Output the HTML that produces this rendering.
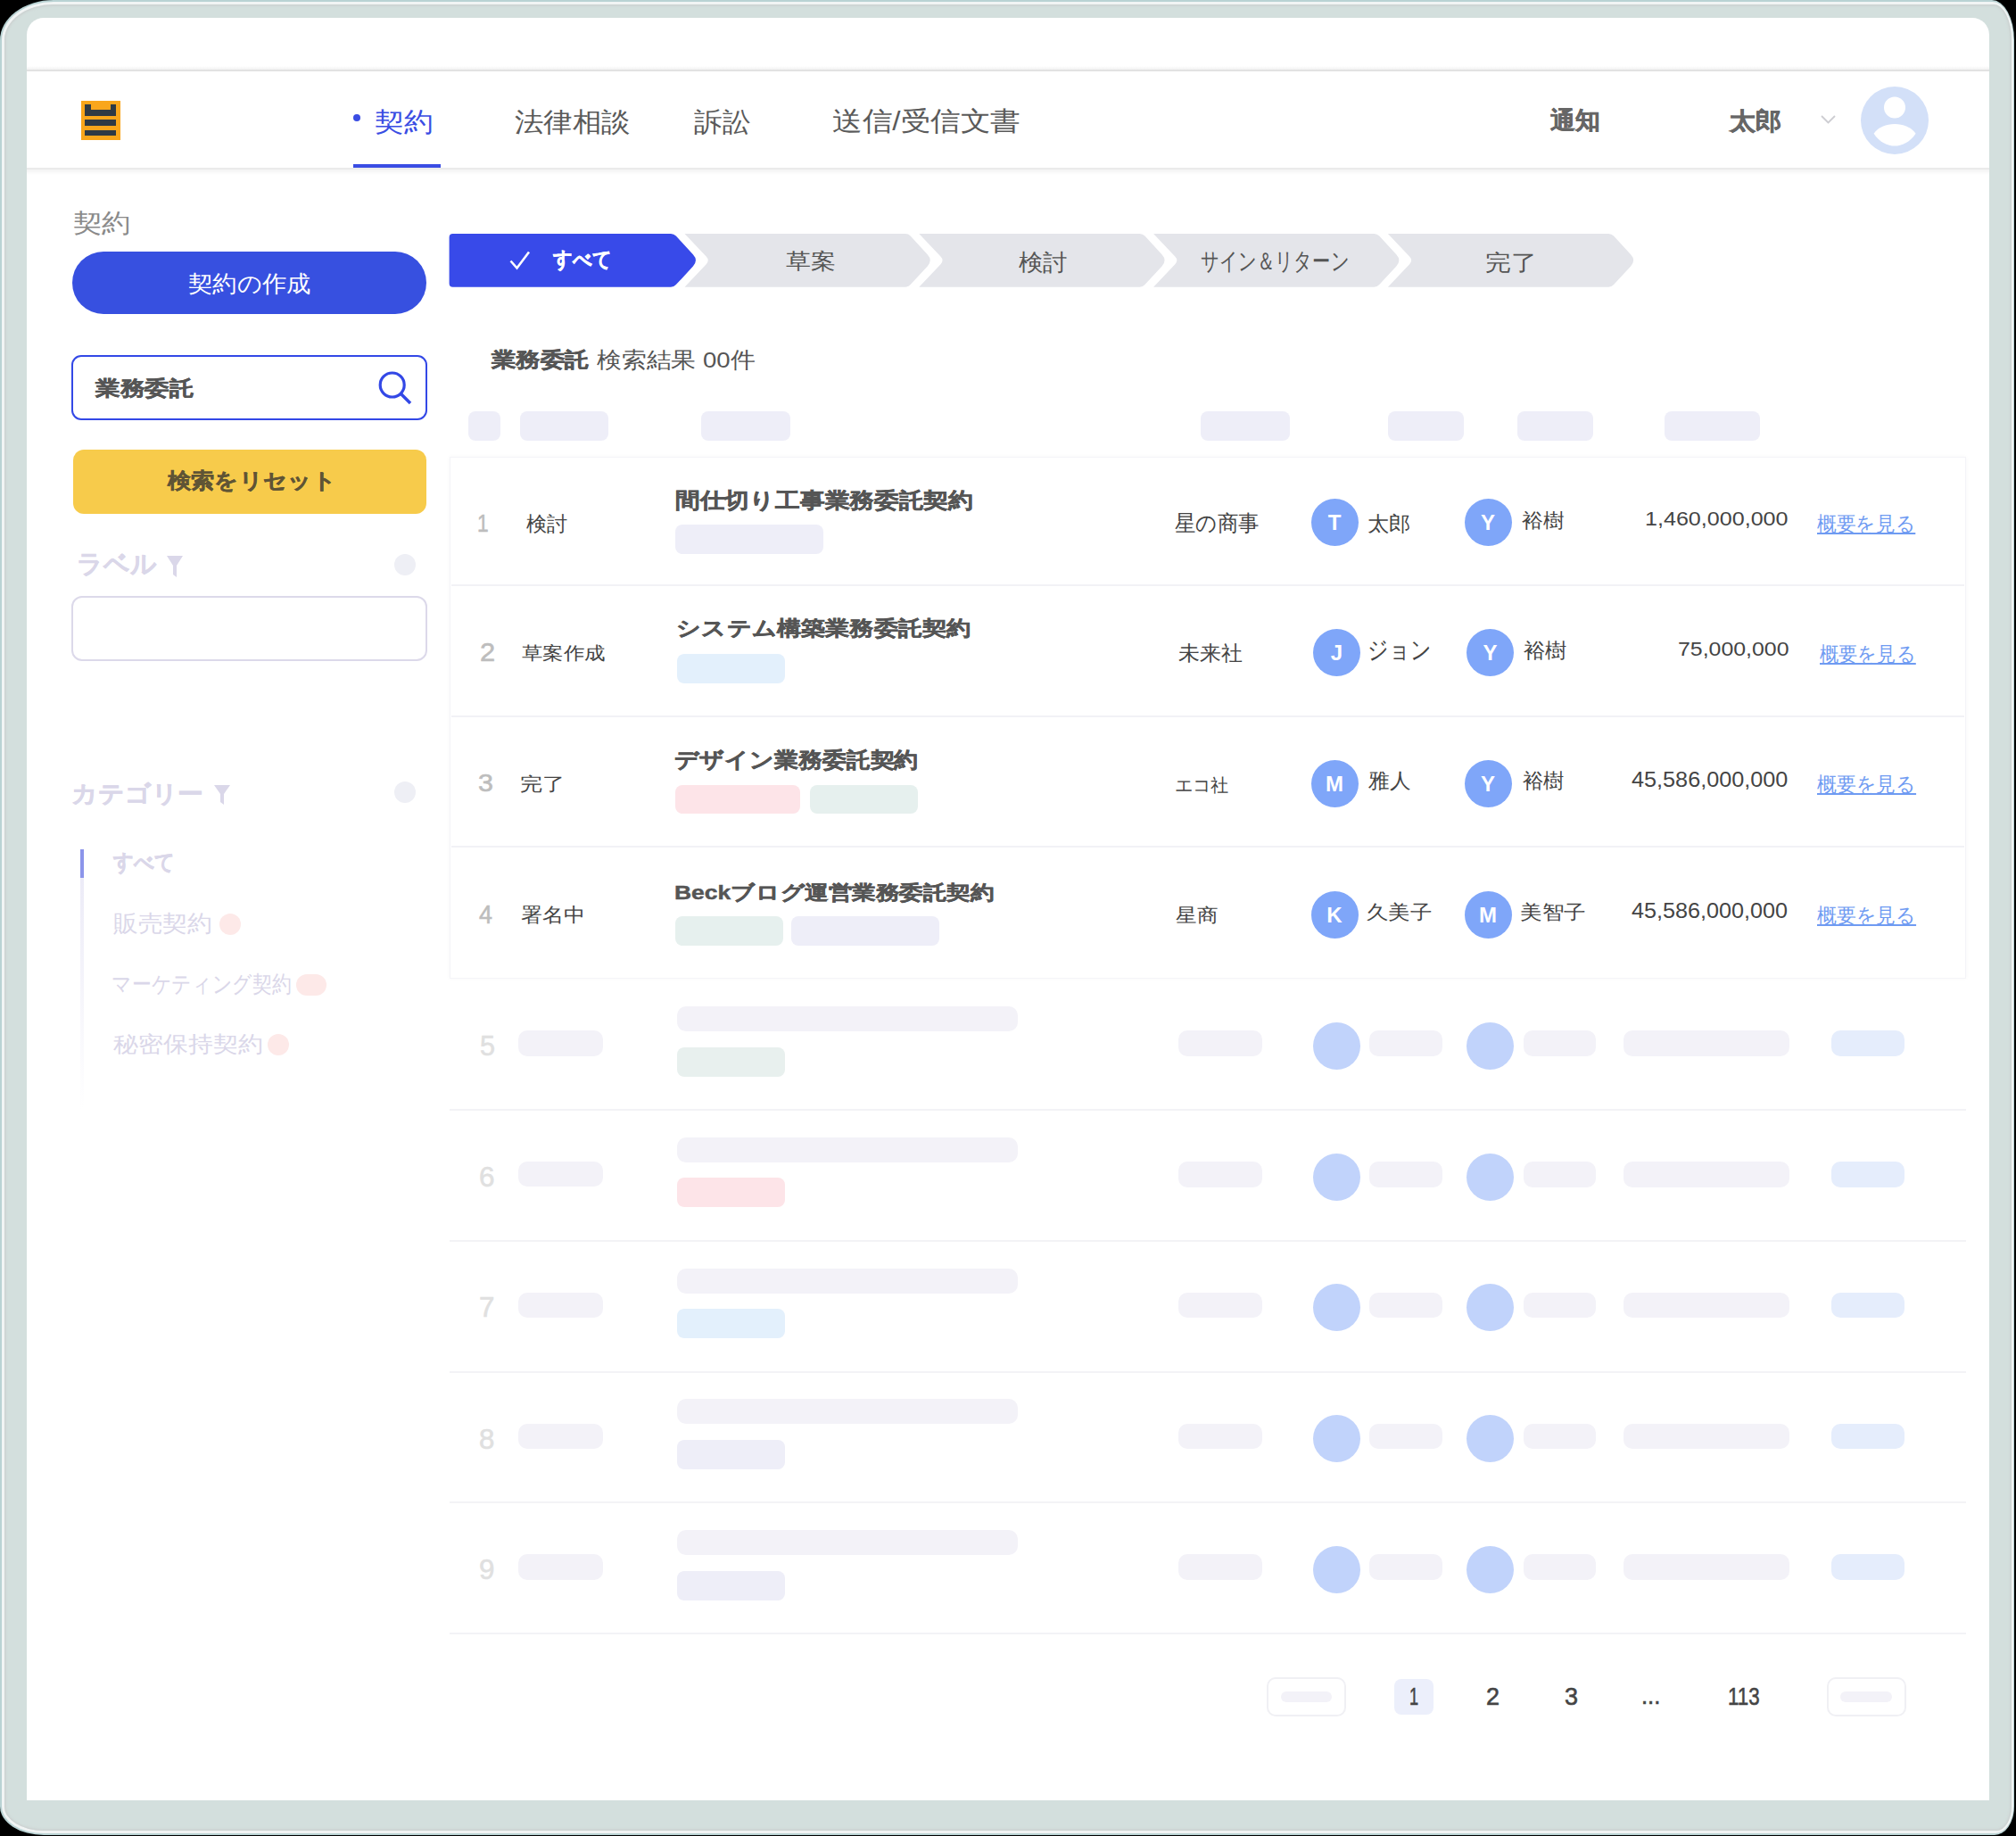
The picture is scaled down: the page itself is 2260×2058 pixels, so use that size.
<!DOCTYPE html>
<html lang="ja">
<head>
<meta charset="utf-8">
<style>
*{margin:0;padding:0;box-sizing:border-box}
html,body{width:2260px;height:2058px;overflow:hidden;background:#000}
body{position:relative;font-family:"Liberation Sans",sans-serif;color:#555}
.a{position:absolute}
.t{position:absolute;white-space:nowrap;line-height:1}
</style>
</head>
<body>
<div class="a" style="left:0;top:0;width:2258px;height:2057px;border-radius:60px 25px 22px 49px / 45px 45px 32px 32px;background:#b9d3d4"></div>
<div class="a" style="left:1.5px;top:2px;width:2255px;height:2053px;border-radius:58px 23px 20px 47px / 43px 43px 30px 30px;background:#f1f4f4"></div>
<div class="a" style="left:4.5px;top:5px;width:2250px;height:2047px;border-radius:55px 20px 17px 44px / 40px 40px 27px 27px;background:#d3dfdd;box-shadow:inset 0 0 3px 1px #c9cccc"></div>
<div class="a" style="left:30px;top:20px;width:2200px;height:1998px;background:#fff;border-radius:19px 19px 0 0"></div>
<div class="a" style="left:30.0px;top:74.0px;width:2200.0px;height:4.0px;background:linear-gradient(#fff,#f2f2f2)"></div>
<div class="a" style="left:30.0px;top:78.0px;width:2200.0px;height:2.0px;background:#e2e2e2"></div>
<div class="a" style="left:30.0px;top:188.0px;width:2200.0px;height:2.0px;background:#ebebeb"></div>
<div class="a" style="left:30.0px;top:190.0px;width:2200.0px;height:6.0px;background:linear-gradient(#f3f3f3,#fff)"></div>
<div class="a" style="left:91.0px;top:113.0px;width:44.0px;height:44.0px;background:#f9a61b"></div>
<div class="a" style="left:95.0px;top:117.0px;width:35.3px;height:13.2px;background:#2f3a44"></div>
<div class="a" style="left:102.0px;top:117.0px;width:21.8px;height:6.2px;background:#f9a61b"></div>
<div class="a" style="left:95.0px;top:134.4px;width:35.3px;height:6.8px;background:#2f3a44"></div>
<div class="a" style="left:95.0px;top:145.5px;width:35.3px;height:6.8px;background:#2f3a44"></div>
<div class="a" style="left:396px;top:128px;width:8px;height:8px;border-radius:50%;background:#3a4de3"></div>
<div class="t" style="left:419.61px;top:121.75px;font-size:29.51px;color:#3a4de3;font-weight:normal;transform:scaleX(1.0883);transform-origin:0 0;">契約</div>
<div class="a" style="left:396.0px;top:184.0px;width:98.0px;height:4.0px;background:#3a4de3"></div>
<div class="t" style="left:576.97px;top:121.75px;font-size:29.51px;color:#5a5a5a;font-weight:normal;transform:scaleX(1.0828);transform-origin:0 0;">法律相談</div>
<div class="t" style="left:778.00px;top:121.75px;font-size:29.53px;color:#5a5a5a;font-weight:normal;transform:scaleX(1.0583);transform-origin:0 0;">訴訟</div>
<div class="t" style="left:932.92px;top:120.95px;font-size:29.76px;color:#5a5a5a;font-weight:normal;transform:scaleX(1.1209);transform-origin:0 0;">送信/受信文書</div>
<div class="t" style="left:1737.99px;top:122.13px;font-size:27.03px;color:#666;font-weight:bold;-webkit-text-stroke-width:0.45px;transform:scaleX(1.0339);transform-origin:0 0;">通知</div>
<div class="t" style="left:1938.94px;top:122.90px;font-size:26.91px;color:#666;font-weight:bold;-webkit-text-stroke-width:0.45px;transform:scaleX(1.0767);transform-origin:0 0;">太郎</div>
<svg class="a" style="left:2040px;top:127px" width="20" height="14" viewBox="0 0 20 14"><path d="M2 3 L9.5 10.5 L17 3" fill="none" stroke="#cdcdd2" stroke-width="1.8"/></svg>
<svg class="a" style="left:2086px;top:97px" width="76" height="76" viewBox="0 0 76 76">
<circle cx="38" cy="38" r="38" fill="#d3e0f8"/><circle cx="38" cy="23.5" r="12" fill="#fff"/><path d="M14.6 52.7 C24 38.5 52 38.5 61.6 52.7 C55 62.5 46 66.6 38 66.6 C30 66.6 21 62.5 14.6 52.7 Z" fill="#fff"/></svg>
<div class="t" style="left:81.55px;top:236.10px;font-size:28.60px;color:#8a8a8a;font-weight:normal;transform:scaleX(1.1124);transform-origin:0 0;">契約</div>
<div class="a" style="left:81.4px;top:282.0px;width:396.6px;height:70.0px;background:#3750e0;border-radius:35px"></div>
<div class="t" style="left:211.34px;top:306.02px;font-size:25.65px;color:#fff;font-weight:normal;transform:scaleX(1.0496);transform-origin:0 0;">契約の作成</div>
<div class="a" style="left:80.3px;top:398.0px;width:399.2px;height:73.0px;border:2px solid #3348e6;border-radius:11px;background:#fff"></div>
<div class="t" style="left:107.00px;top:423.56px;font-size:23.18px;color:#555;font-weight:bold;-webkit-text-stroke-width:0.45px;transform:scaleX(1.1975);transform-origin:0 0;">業務委託</div>
<svg class="a" style="left:420px;top:412px" width="44" height="44" viewBox="0 0 44 44"><circle cx="19.7" cy="19.5" r="13.5" fill="none" stroke="#3348e6" stroke-width="3.2"/><path d="M29.5 29.5 L40 40" stroke="#3348e6" stroke-width="3.6" stroke-linecap="butt"/></svg>
<div class="a" style="left:81.8px;top:504.0px;width:396.2px;height:71.6px;background:#f7cb4b;border-radius:12px"></div>
<div class="t" style="left:187.94px;top:527.30px;font-size:24.14px;color:#5f5435;font-weight:bold;-webkit-text-stroke-width:0.45px;transform:scaleX(1.0919);transform-origin:0 0;">検索をリセット</div>
<div class="t" style="left:86.20px;top:618.38px;font-size:28.71px;color:#dad7e9;font-weight:bold;-webkit-text-stroke-width:0.45px;transform:scaleX(0.9924);transform-origin:0 0;">ラベル</div>
<svg class="a" style="left:186px;top:622px" width="20" height="26" viewBox="0 0 20 26"><path d="M1 1 H19 L12 12 V25 L8 22 V12 Z" fill="#dad7e9"/></svg>
<div class="a" style="left:442px;top:621px;width:24px;height:24px;border-radius:50%;background:#eeeff5"></div>
<div class="a" style="left:80.3px;top:668.0px;width:399.2px;height:73.0px;border:2px solid #dcd9ea;border-radius:12px"></div>
<div class="t" style="left:79.99px;top:876.97px;font-size:26.71px;color:#dad7e9;font-weight:bold;-webkit-text-stroke-width:0.45px;transform:scaleX(1.0663);transform-origin:0 0;">カテゴリー</div>
<svg class="a" style="left:239px;top:879px" width="20" height="24" viewBox="0 0 20 24"><path d="M1 1 H19 L12 11 V23 L8 20 V11 Z" fill="#dad7e9"/></svg>
<div class="a" style="left:442px;top:876px;width:24px;height:24px;border-radius:50%;background:#eeeff5"></div>
<div class="a" style="left:90.0px;top:984.0px;width:4.0px;height:260.0px;background:linear-gradient(#ecebf7,#fff)"></div>
<div class="a" style="left:90.0px;top:952.0px;width:4.0px;height:32.0px;background:#8c95ea"></div>
<div class="t" style="left:127.06px;top:953.87px;font-size:25.29px;color:#dad7e9;font-weight:bold;-webkit-text-stroke-width:0.45px;transform:scaleX(0.8929);transform-origin:0 0;">すべて</div>
<div class="t" style="left:126.93px;top:1023.00px;font-size:25.96px;color:#dad7e9;font-weight:normal;transform:scaleX(1.0661);transform-origin:0 0;">販売契約</div>
<div class="a" style="left:246px;top:1024px;width:24px;height:24px;border-radius:50%;background:#fde9e8"></div>
<div class="t" style="left:125.01px;top:1090.94px;font-size:25.84px;color:#dad7e9;font-weight:normal;transform:scaleX(0.8413);transform-origin:0 0;">マーケティング契約</div>
<div class="a" style="left:331.7px;top:1091.5px;width:34.3px;height:24.0px;background:#fde9e8;border-radius:12px"></div>
<div class="t" style="left:126.59px;top:1158.73px;font-size:24.72px;color:#dad7e9;font-weight:normal;transform:scaleX(1.1165);transform-origin:0 0;">秘密保持契約</div>
<div class="a" style="left:300px;top:1159px;width:24px;height:24px;border-radius:50%;background:#fde9e8"></div>
<svg class="a" style="left:0;top:0" width="2260" height="400" viewBox="0 0 2260 400"><path d="M503.60 265.90 Q503.60 261.90 507.60 261.90 L752.00 261.90 Q755.50 261.90 757.87 264.48 L776.91 285.18 Q783.00 291.80 776.91 298.42 L757.87 319.12 Q755.50 321.70 752.00 321.70 L507.60 321.70 Q503.60 321.70 503.60 317.70 Z" fill="#384ae9"/><path d="M767.50 261.90 L1014.80 261.90 Q1018.30 261.90 1020.67 264.48 L1039.71 285.18 Q1045.80 291.80 1039.71 298.42 L1020.67 319.12 Q1018.30 321.70 1014.80 321.70 L767.50 321.70 L791.68 296.16 Q795.80 291.80 791.68 287.44 Z" fill="#e4e5ea"/><path d="M1030.30 261.90 L1277.60 261.90 Q1281.10 261.90 1283.47 264.48 L1302.51 285.18 Q1308.60 291.80 1302.51 298.42 L1283.47 319.12 Q1281.10 321.70 1277.60 321.70 L1030.30 321.70 L1054.48 296.16 Q1058.60 291.80 1054.48 287.44 Z" fill="#e4e5ea"/><path d="M1293.10 261.90 L1540.40 261.90 Q1543.90 261.90 1546.27 264.48 L1565.31 285.18 Q1571.40 291.80 1565.31 298.42 L1546.27 319.12 Q1543.90 321.70 1540.40 321.70 L1293.10 321.70 L1317.28 296.16 Q1321.40 291.80 1317.28 287.44 Z" fill="#e4e5ea"/><path d="M1555.90 261.90 L1803.20 261.90 Q1806.70 261.90 1809.07 264.48 L1828.11 285.18 Q1834.20 291.80 1828.11 298.42 L1809.07 319.12 Q1806.70 321.70 1803.20 321.70 L1555.90 321.70 L1580.08 296.16 Q1584.20 291.80 1580.08 287.44 Z" fill="#e4e5ea"/></svg>
<svg class="a" style="left:570px;top:280px" width="26" height="26" viewBox="0 0 26 26"><path d="M2.5 12.5 L9.5 20.5 L23 2.5" fill="none" stroke="#fff" stroke-width="2.6"/></svg>
<div class="t" style="left:619.99px;top:279.12px;font-size:23.77px;color:#fff;font-weight:bold;-webkit-text-stroke-width:0.45px;transform:scaleX(0.8872);transform-origin:0 0;">すべて</div>
<div class="t" style="left:881.16px;top:282.45px;font-size:23.71px;color:#555;font-weight:normal;transform:scaleX(1.1675);transform-origin:0 0;">草案</div>
<div class="t" style="left:1142.04px;top:281.64px;font-size:25.95px;color:#555;font-weight:normal;transform:scaleX(1.0550);transform-origin:0 0;">検討</div>
<div class="t" style="left:1345.98px;top:279.91px;font-size:27.04px;color:#555;font-weight:normal;transform:scaleX(0.7506);transform-origin:0 0;">サイン＆リターン</div>
<div class="t" style="left:1665.35px;top:282.91px;font-size:24.58px;color:#555;font-weight:normal;transform:scaleX(1.1532);transform-origin:0 0;">完了</div>
<div class="t" style="left:550.67px;top:391.57px;font-size:23.18px;color:#555;font-weight:bold;-webkit-text-stroke-width:0.45px;transform:scaleX(1.1889);transform-origin:0 0;">業務委託</div>
<div class="t" style="left:668.91px;top:392.16px;font-size:24.76px;color:#555;font-weight:normal;transform:scaleX(1.1128);transform-origin:0 0;">検索結果 00件</div>
<div class="a" style="left:525.3px;top:461.0px;width:35.7px;height:32.5px;background:#eeeef8;border-radius:8px"></div>
<div class="a" style="left:582.7px;top:461.0px;width:99.7px;height:32.5px;background:#eeeef8;border-radius:8px"></div>
<div class="a" style="left:785.7px;top:461.0px;width:100.3px;height:32.5px;background:#eeeef8;border-radius:8px"></div>
<div class="a" style="left:1346.0px;top:461.0px;width:100.0px;height:32.5px;background:#eeeef8;border-radius:8px"></div>
<div class="a" style="left:1556.0px;top:461.0px;width:85.0px;height:32.5px;background:#eeeef8;border-radius:8px"></div>
<div class="a" style="left:1701.0px;top:461.0px;width:85.0px;height:32.5px;background:#eeeef8;border-radius:8px"></div>
<div class="a" style="left:1865.7px;top:461.0px;width:107.3px;height:32.5px;background:#eeeef8;border-radius:8px"></div>
<div class="a" style="left:503.5px;top:512.0px;width:1700.5px;height:585.0px;border:1.5px solid #f4f4f8;box-shadow:0 0 5px rgba(0,0,0,0.035);background:#fff"></div>
<div class="a" style="left:505.5px;top:655.0px;width:1696.5px;height:2.0px;background:#f2f2f6"></div>
<div class="a" style="left:505.5px;top:802.0px;width:1696.5px;height:2.0px;background:#f2f2f6"></div>
<div class="a" style="left:505.5px;top:948.0px;width:1696.5px;height:2.0px;background:#f2f2f6"></div>
<div class="t" style="left:535.43px;top:573.36px;font-size:27.44px;color:#bdbdbd;font-weight:normal;-webkit-text-stroke-width:0.6px;transform:scaleX(0.8271);transform-origin:0 0;">1</div>
<div class="t" style="left:590.00px;top:575.61px;font-size:23.08px;color:#444;font-weight:normal;transform:scaleX(1.0075);transform-origin:0 0;">検討</div>
<div class="t" style="left:757.02px;top:548.64px;font-size:23.84px;color:#555;font-weight:bold;-webkit-text-stroke-width:0.45px;transform:scaleX(1.1556);transform-origin:0 0;">間仕切り工事業務委託契約</div>
<div class="a" style="left:756.9px;top:588.0px;width:165.8px;height:32.6px;background:#eeeef8;border-radius:8px"></div>
<div class="t" style="left:1317.45px;top:574.88px;font-size:24.58px;color:#444;font-weight:normal;transform:scaleX(0.9377);transform-origin:0 0;">星の商事</div>
<div class="a" style="left:1469.5px;top:559.1px;width:53px;height:53px;border-radius:50%;background:#7fa6f9;color:#fff;font-weight:bold;font-size:24px;line-height:53px;text-align:center">T</div>
<div class="t" style="left:1532.96px;top:575.62px;font-size:22.96px;color:#444;font-weight:normal;transform:scaleX(1.0573);transform-origin:0 0;">太郎</div>
<div class="a" style="left:1641.5px;top:559.1px;width:53px;height:53px;border-radius:50%;background:#7fa6f9;color:#fff;font-weight:bold;font-size:24px;line-height:53px;text-align:center">Y</div>
<div class="t" style="left:1705.94px;top:573.18px;font-size:21.74px;color:#444;font-weight:normal;transform:scaleX(1.0799);transform-origin:0 0;">裕樹</div>
<div class="t" style="left:1843.90px;top:570.51px;font-size:22.64px;color:#444;font-weight:normal;transform:scaleX(1.1093);transform-origin:0 0;">1,460,000,000</div>
<div class="t" style="left:2037.30px;top:575.58px;font-size:22.81px;color:#6f9bf2;font-weight:normal;transform:scaleX(0.9426);transform-origin:0 0;text-decoration:underline">概要を見る</div>
<div class="t" style="left:538.04px;top:716.12px;font-size:30.25px;color:#bdbdbd;font-weight:normal;-webkit-text-stroke-width:0.6px;transform:scaleX(1.0190);transform-origin:0 0;">2</div>
<div class="t" style="left:584.97px;top:722.17px;font-size:20.00px;color:#444;font-weight:normal;transform:scaleX(1.1749);transform-origin:0 0;">草案作成</div>
<div class="t" style="left:758.15px;top:692.99px;font-size:23.17px;color:#555;font-weight:bold;-webkit-text-stroke-width:0.45px;transform:scaleX(1.1786);transform-origin:0 0;">システム構築業務委託契約</div>
<div class="a" style="left:759.0px;top:733.3px;width:120.8px;height:32.6px;background:#e3f0fc;border-radius:8px"></div>
<div class="t" style="left:1320.50px;top:721.07px;font-size:23.00px;color:#444;font-weight:normal;transform:scaleX(1.0392);transform-origin:0 0;">未来社</div>
<div class="a" style="left:1471.9px;top:704.7px;width:53px;height:53px;border-radius:50%;background:#7fa6f9;color:#fff;font-weight:bold;font-size:24px;line-height:53px;text-align:center">J</div>
<div class="t" style="left:1533.03px;top:714.73px;font-size:28.02px;color:#444;font-weight:normal;transform:scaleX(0.8206);transform-origin:0 0;">ジョン</div>
<div class="a" style="left:1643.9px;top:704.7px;width:53px;height:53px;border-radius:50%;background:#7fa6f9;color:#fff;font-weight:bold;font-size:24px;line-height:53px;text-align:center">Y</div>
<div class="t" style="left:1707.89px;top:718.13px;font-size:22.81px;color:#444;font-weight:normal;transform:scaleX(1.0558);transform-origin:0 0;">裕樹</div>
<div class="t" style="left:1881.18px;top:715.98px;font-size:22.76px;color:#444;font-weight:normal;transform:scaleX(1.0937);transform-origin:0 0;">75,000,000</div>
<div class="t" style="left:2040.02px;top:722.19px;font-size:23.00px;color:#6f9bf2;font-weight:normal;transform:scaleX(0.9213);transform-origin:0 0;text-decoration:underline">概要を見る</div>
<div class="t" style="left:535.83px;top:864.03px;font-size:27.45px;color:#bdbdbd;font-weight:normal;-webkit-text-stroke-width:0.6px;transform:scaleX(1.1099);transform-origin:0 0;">3</div>
<div class="t" style="left:583.18px;top:869.22px;font-size:20.73px;color:#444;font-weight:normal;transform:scaleX(1.1985);transform-origin:0 0;">完了</div>
<div class="t" style="left:756.05px;top:839.59px;font-size:23.94px;color:#555;font-weight:bold;-webkit-text-stroke-width:0.45px;transform:scaleX(1.1204);transform-origin:0 0;">デザイン業務委託契約</div>
<div class="a" style="left:757.2px;top:879.7px;width:139.8px;height:32.6px;background:#fde4e8;border-radius:8px"></div>
<div class="a" style="left:908.0px;top:879.7px;width:120.9px;height:32.6px;background:#e6f0ee;border-radius:8px"></div>
<div class="t" style="left:1317.28px;top:871.01px;font-size:19.65px;color:#444;font-weight:normal;transform:scaleX(1.0108);transform-origin:0 0;">エコ社</div>
<div class="a" style="left:1469.5px;top:852.3px;width:53px;height:53px;border-radius:50%;background:#7fa6f9;color:#fff;font-weight:bold;font-size:24px;line-height:53px;text-align:center">M</div>
<div class="t" style="left:1533.93px;top:864.37px;font-size:23.41px;color:#444;font-weight:normal;transform:scaleX(1.0250);transform-origin:0 0;">雅人</div>
<div class="a" style="left:1641.5px;top:852.3px;width:53px;height:53px;border-radius:50%;background:#7fa6f9;color:#fff;font-weight:bold;font-size:24px;line-height:53px;text-align:center">Y</div>
<div class="t" style="left:1706.80px;top:864.36px;font-size:22.87px;color:#444;font-weight:normal;transform:scaleX(1.0130);transform-origin:0 0;">裕樹</div>
<div class="t" style="left:1829.00px;top:861.98px;font-size:23.89px;color:#444;font-weight:normal;transform:scaleX(1.0567);transform-origin:0 0;">45,586,000,000</div>
<div class="t" style="left:2036.97px;top:869.18px;font-size:22.54px;color:#6f9bf2;font-weight:normal;transform:scaleX(0.9495);transform-origin:0 0;text-decoration:underline">概要を見る</div>
<div class="t" style="left:536.86px;top:1010.53px;font-size:28.72px;color:#bdbdbd;font-weight:normal;-webkit-text-stroke-width:0.6px;transform:scaleX(0.9345);transform-origin:0 0;">4</div>
<div class="t" style="left:583.58px;top:1014.53px;font-size:22.48px;color:#444;font-weight:normal;transform:scaleX(1.0919);transform-origin:0 0;">署名中</div>
<div class="t" style="left:756.11px;top:990.46px;font-size:21.92px;color:#555;font-weight:bold;-webkit-text-stroke-width:0.45px;transform:scaleX(1.2047);transform-origin:0 0;">Beckブログ運営業務委託契約</div>
<div class="a" style="left:757.0px;top:1027.0px;width:120.5px;height:32.6px;background:#e6f0ee;border-radius:8px"></div>
<div class="a" style="left:887.0px;top:1027.0px;width:166.0px;height:32.6px;background:#eeeef8;border-radius:8px"></div>
<div class="t" style="left:1318.46px;top:1015.61px;font-size:20.75px;color:#444;font-weight:normal;transform:scaleX(1.1246);transform-origin:0 0;">星商</div>
<div class="a" style="left:1469.5px;top:999.0px;width:53px;height:53px;border-radius:50%;background:#7fa6f9;color:#fff;font-weight:bold;font-size:24px;line-height:53px;text-align:center">K</div>
<div class="t" style="left:1532.13px;top:1011.70px;font-size:21.91px;color:#444;font-weight:normal;transform:scaleX(1.1115);transform-origin:0 0;">久美子</div>
<div class="a" style="left:1641.5px;top:999.0px;width:53px;height:53px;border-radius:50%;background:#7fa6f9;color:#fff;font-weight:bold;font-size:24px;line-height:53px;text-align:center">M</div>
<div class="t" style="left:1704.43px;top:1012.26px;font-size:22.15px;color:#444;font-weight:normal;transform:scaleX(1.1151);transform-origin:0 0;">美智子</div>
<div class="t" style="left:1829.00px;top:1010.33px;font-size:23.30px;color:#444;font-weight:normal;transform:scaleX(1.0813);transform-origin:0 0;">45,586,000,000</div>
<div class="t" style="left:2036.97px;top:1015.97px;font-size:22.54px;color:#6f9bf2;font-weight:normal;transform:scaleX(0.9495);transform-origin:0 0;text-decoration:underline">概要を見る</div>
<div class="t" style="left:537.88px;top:1156.97px;font-size:30.98px;color:#e0e0e0;font-weight:normal;-webkit-text-stroke-width:0.6px;transform:scaleX(0.9877);transform-origin:0 0;">5</div>
<div class="a" style="left:581.2px;top:1155.4px;width:94.4px;height:28.2px;background:#f3f2f8;border-radius:10px"></div>
<div class="a" style="left:759.2px;top:1128.0px;width:381.7px;height:28.2px;background:#f3f2f8;border-radius:10px"></div>
<div class="a" style="left:759.2px;top:1173.5px;width:121.3px;height:33.0px;background:#e8f0ee;border-radius:8px"></div>
<div class="a" style="left:1320.8px;top:1155.4px;width:94.5px;height:28.6px;background:#f3f2f8;border-radius:10px"></div>
<div class="a" style="left:1471.8px;top:1145.9px;width:53px;height:53px;border-radius:50%;background:#c1d3fb"></div>
<div class="a" style="left:1535.2px;top:1155.4px;width:81.8px;height:28.6px;background:#f3f2f8;border-radius:10px"></div>
<div class="a" style="left:1644.3px;top:1145.9px;width:53px;height:53px;border-radius:50%;background:#c1d3fb"></div>
<div class="a" style="left:1707.7px;top:1155.4px;width:81.3px;height:28.6px;background:#f3f2f8;border-radius:10px"></div>
<div class="a" style="left:1820.3px;top:1155.4px;width:185.4px;height:28.6px;background:#f3f2f8;border-radius:10px"></div>
<div class="a" style="left:2052.8px;top:1155.4px;width:82.1px;height:28.6px;background:#e5edfc;border-radius:10px"></div>
<div class="a" style="left:504.0px;top:1243.0px;width:1700.0px;height:2.0px;background:#f3f3f6"></div>
<div class="t" style="left:537.33px;top:1304.77px;font-size:30.97px;color:#e0e0e0;font-weight:normal;-webkit-text-stroke-width:0.6px;transform:scaleX(1.0163);transform-origin:0 0;">6</div>
<div class="a" style="left:581.2px;top:1302.2px;width:94.4px;height:28.2px;background:#f3f2f8;border-radius:10px"></div>
<div class="a" style="left:759.2px;top:1274.8px;width:381.7px;height:28.2px;background:#f3f2f8;border-radius:10px"></div>
<div class="a" style="left:759.2px;top:1320.2px;width:121.3px;height:33.0px;background:#fde4e8;border-radius:8px"></div>
<div class="a" style="left:1320.8px;top:1302.2px;width:94.5px;height:28.6px;background:#f3f2f8;border-radius:10px"></div>
<div class="a" style="left:1471.8px;top:1292.7px;width:53px;height:53px;border-radius:50%;background:#c1d3fb"></div>
<div class="a" style="left:1535.2px;top:1302.2px;width:81.8px;height:28.6px;background:#f3f2f8;border-radius:10px"></div>
<div class="a" style="left:1644.3px;top:1292.7px;width:53px;height:53px;border-radius:50%;background:#c1d3fb"></div>
<div class="a" style="left:1707.7px;top:1302.2px;width:81.3px;height:28.6px;background:#f3f2f8;border-radius:10px"></div>
<div class="a" style="left:1820.3px;top:1302.2px;width:185.4px;height:28.6px;background:#f3f2f8;border-radius:10px"></div>
<div class="a" style="left:2052.8px;top:1302.2px;width:82.1px;height:28.6px;background:#e5edfc;border-radius:10px"></div>
<div class="a" style="left:504.0px;top:1389.8px;width:1700.0px;height:2.0px;background:#f3f3f6"></div>
<div class="t" style="left:537.33px;top:1450.22px;font-size:31.49px;color:#e0e0e0;font-weight:normal;-webkit-text-stroke-width:0.6px;transform:scaleX(0.9959);transform-origin:0 0;">7</div>
<div class="a" style="left:581.2px;top:1448.9px;width:94.4px;height:28.2px;background:#f3f2f8;border-radius:10px"></div>
<div class="a" style="left:759.2px;top:1421.5px;width:381.7px;height:28.2px;background:#f3f2f8;border-radius:10px"></div>
<div class="a" style="left:759.2px;top:1467.0px;width:121.3px;height:33.0px;background:#e3f0fc;border-radius:8px"></div>
<div class="a" style="left:1320.8px;top:1448.9px;width:94.5px;height:28.6px;background:#f3f2f8;border-radius:10px"></div>
<div class="a" style="left:1471.8px;top:1439.4px;width:53px;height:53px;border-radius:50%;background:#c1d3fb"></div>
<div class="a" style="left:1535.2px;top:1448.9px;width:81.8px;height:28.6px;background:#f3f2f8;border-radius:10px"></div>
<div class="a" style="left:1644.3px;top:1439.4px;width:53px;height:53px;border-radius:50%;background:#c1d3fb"></div>
<div class="a" style="left:1707.7px;top:1448.9px;width:81.3px;height:28.6px;background:#f3f2f8;border-radius:10px"></div>
<div class="a" style="left:1820.3px;top:1448.9px;width:185.4px;height:28.6px;background:#f3f2f8;border-radius:10px"></div>
<div class="a" style="left:2052.8px;top:1448.9px;width:82.1px;height:28.6px;background:#e5edfc;border-radius:10px"></div>
<div class="a" style="left:504.0px;top:1536.5px;width:1700.0px;height:2.0px;background:#f3f3f6"></div>
<div class="t" style="left:537.36px;top:1597.82px;font-size:30.47px;color:#e0e0e0;font-weight:normal;-webkit-text-stroke-width:0.6px;transform:scaleX(1.0243);transform-origin:0 0;">8</div>
<div class="a" style="left:581.2px;top:1595.7px;width:94.4px;height:28.2px;background:#f3f2f8;border-radius:10px"></div>
<div class="a" style="left:759.2px;top:1568.2px;width:381.7px;height:28.2px;background:#f3f2f8;border-radius:10px"></div>
<div class="a" style="left:759.2px;top:1613.8px;width:121.3px;height:33.0px;background:#eeeef8;border-radius:8px"></div>
<div class="a" style="left:1320.8px;top:1595.7px;width:94.5px;height:28.6px;background:#f3f2f8;border-radius:10px"></div>
<div class="a" style="left:1471.8px;top:1586.2px;width:53px;height:53px;border-radius:50%;background:#c1d3fb"></div>
<div class="a" style="left:1535.2px;top:1595.7px;width:81.8px;height:28.6px;background:#f3f2f8;border-radius:10px"></div>
<div class="a" style="left:1644.3px;top:1586.2px;width:53px;height:53px;border-radius:50%;background:#c1d3fb"></div>
<div class="a" style="left:1707.7px;top:1595.7px;width:81.3px;height:28.6px;background:#f3f2f8;border-radius:10px"></div>
<div class="a" style="left:1820.3px;top:1595.7px;width:185.4px;height:28.6px;background:#f3f2f8;border-radius:10px"></div>
<div class="a" style="left:2052.8px;top:1595.7px;width:82.1px;height:28.6px;background:#e5edfc;border-radius:10px"></div>
<div class="a" style="left:504.0px;top:1683.2px;width:1700.0px;height:2.0px;background:#f3f3f6"></div>
<div class="t" style="left:537.33px;top:1743.62px;font-size:31.49px;color:#e0e0e0;font-weight:normal;-webkit-text-stroke-width:0.6px;transform:scaleX(0.9959);transform-origin:0 0;">9</div>
<div class="a" style="left:581.2px;top:1742.4px;width:94.4px;height:28.2px;background:#f3f2f8;border-radius:10px"></div>
<div class="a" style="left:759.2px;top:1715.0px;width:381.7px;height:28.2px;background:#f3f2f8;border-radius:10px"></div>
<div class="a" style="left:759.2px;top:1760.5px;width:121.3px;height:33.0px;background:#eeeef8;border-radius:8px"></div>
<div class="a" style="left:1320.8px;top:1742.4px;width:94.5px;height:28.6px;background:#f3f2f8;border-radius:10px"></div>
<div class="a" style="left:1471.8px;top:1732.9px;width:53px;height:53px;border-radius:50%;background:#c1d3fb"></div>
<div class="a" style="left:1535.2px;top:1742.4px;width:81.8px;height:28.6px;background:#f3f2f8;border-radius:10px"></div>
<div class="a" style="left:1644.3px;top:1732.9px;width:53px;height:53px;border-radius:50%;background:#c1d3fb"></div>
<div class="a" style="left:1707.7px;top:1742.4px;width:81.3px;height:28.6px;background:#f3f2f8;border-radius:10px"></div>
<div class="a" style="left:1820.3px;top:1742.4px;width:185.4px;height:28.6px;background:#f3f2f8;border-radius:10px"></div>
<div class="a" style="left:2052.8px;top:1742.4px;width:82.1px;height:28.6px;background:#e5edfc;border-radius:10px"></div>
<div class="a" style="left:504.0px;top:1830.0px;width:1700.0px;height:2.0px;background:#f3f3f6"></div>
<div class="a" style="left:1419.8px;top:1880.3px;width:89.2px;height:43.3px;border:2px solid #f0f0f4;border-radius:10px"></div>
<div class="a" style="left:1435.8px;top:1895.6px;width:57.7px;height:12.4px;background:#f3f2f8;border-radius:6px"></div>
<div class="a" style="left:2048.4px;top:1880.3px;width:88.6px;height:43.3px;border:2px solid #f0f0f4;border-radius:10px"></div>
<div class="a" style="left:2062.8px;top:1895.6px;width:58.5px;height:12.4px;background:#f3f2f8;border-radius:6px"></div>
<div class="a" style="left:1563.4px;top:1882.0px;width:43.6px;height:40.3px;background:#eceffb;border-radius:8px"></div>
<div class="t" style="left:1579.57px;top:1886.80px;font-size:28.36px;color:#444;font-weight:normal;-webkit-text-stroke-width:0.6px;transform:scaleX(0.6430);transform-origin:0 0;">1</div>
<div class="t" style="left:1665.80px;top:1886.57px;font-size:28.54px;color:#444;font-weight:normal;-webkit-text-stroke-width:0.6px;transform:scaleX(0.9459);transform-origin:0 0;">2</div>
<div class="t" style="left:1753.99px;top:1886.80px;font-size:28.36px;color:#444;font-weight:normal;-webkit-text-stroke-width:0.6px;transform:scaleX(0.9514);transform-origin:0 0;">3</div>
<div class="t" style="left:1839.88px;top:1888.00px;font-size:27.00px;color:#444;font-weight:normal;-webkit-text-stroke-width:0.6px;transform:scaleX(0.9475);transform-origin:0 0;">...</div>
<div class="t" style="left:1937.33px;top:1886.80px;font-size:28.36px;color:#444;font-weight:normal;-webkit-text-stroke-width:0.6px;transform:scaleX(0.7874);transform-origin:0 0;">113</div>
</body></html>
